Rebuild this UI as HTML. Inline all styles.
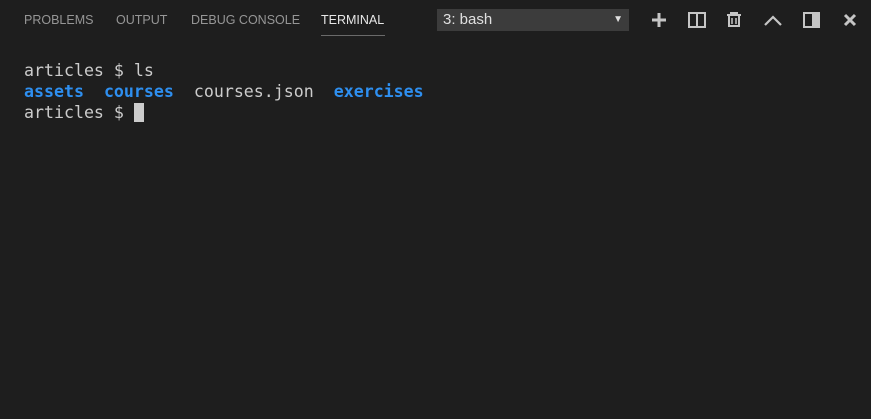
<!DOCTYPE html>
<html><head><style>
body{margin:0;width:871px;height:419px;background:#1e1e1e;overflow:hidden;font-family:"Liberation Sans",sans-serif;}
.tab{position:absolute;top:13px;font-size:12.5px;color:#969696;letter-spacing:0}
.term{position:absolute;left:24px;top:60px;font-family:"DejaVu Sans Mono",monospace;font-size:16.6px;line-height:21px;color:#cccccc;white-space:pre}
.b{color:#2e8ff0;font-weight:bold}
.cur{display:inline-block;width:10px;height:19px;background:#cccccc;vertical-align:-4px}
svg{position:absolute}
</style></head><body>
<div class="tab" style="left:24px">PROBLEMS</div>
<div class="tab" style="left:116px">OUTPUT</div>
<div class="tab" style="left:191px">DEBUG CONSOLE</div>
<div class="tab" style="left:321px;color:#e7e7e7">TERMINAL</div>
<div style="position:absolute;left:321px;top:35px;width:64px;height:1px;background:#6a6a6a"></div>
<div style="position:absolute;left:437px;top:9px;width:192px;height:22px;background:#3c3c3c;color:#e0e0e0;font-size:15px;line-height:22px"><span style="margin-left:6px">3: bash</span><span style="position:absolute;right:6px;top:0;font-size:10px">▼</span></div>
<svg width="871" height="40" style="left:0;top:0" fill="none" stroke="#c5c5c5" stroke-width="2.2">
<path d="M652 20h14M659 13v14" stroke-width="3"/>
<rect x="689" y="13" width="16" height="14" stroke-width="2"/><path d="M697 13v14" stroke-width="2"/>
<path d="M727 15h14M731 15v-2h6v2M729 16v10h10v-10" stroke-width="2"/><path d="M732 18v6M736 18v6" stroke-width="1.5"/>
<path d="M765 25l8-8 8 8" stroke-width="2.2"/>
<rect x="804" y="13" width="15" height="14" stroke-width="2"/><rect x="812" y="13" width="7" height="14" fill="#c5c5c5" stroke="none"/>
<path d="M845 15l10 10M855 15l-10 10" stroke-width="3"/>
</svg>
<div class="term">articles $ ls
<span class="b">assets</span>  <span class="b">courses</span>  courses.json  <span class="b">exercises</span>
articles $ <span class="cur"></span></div>
</body></html>
